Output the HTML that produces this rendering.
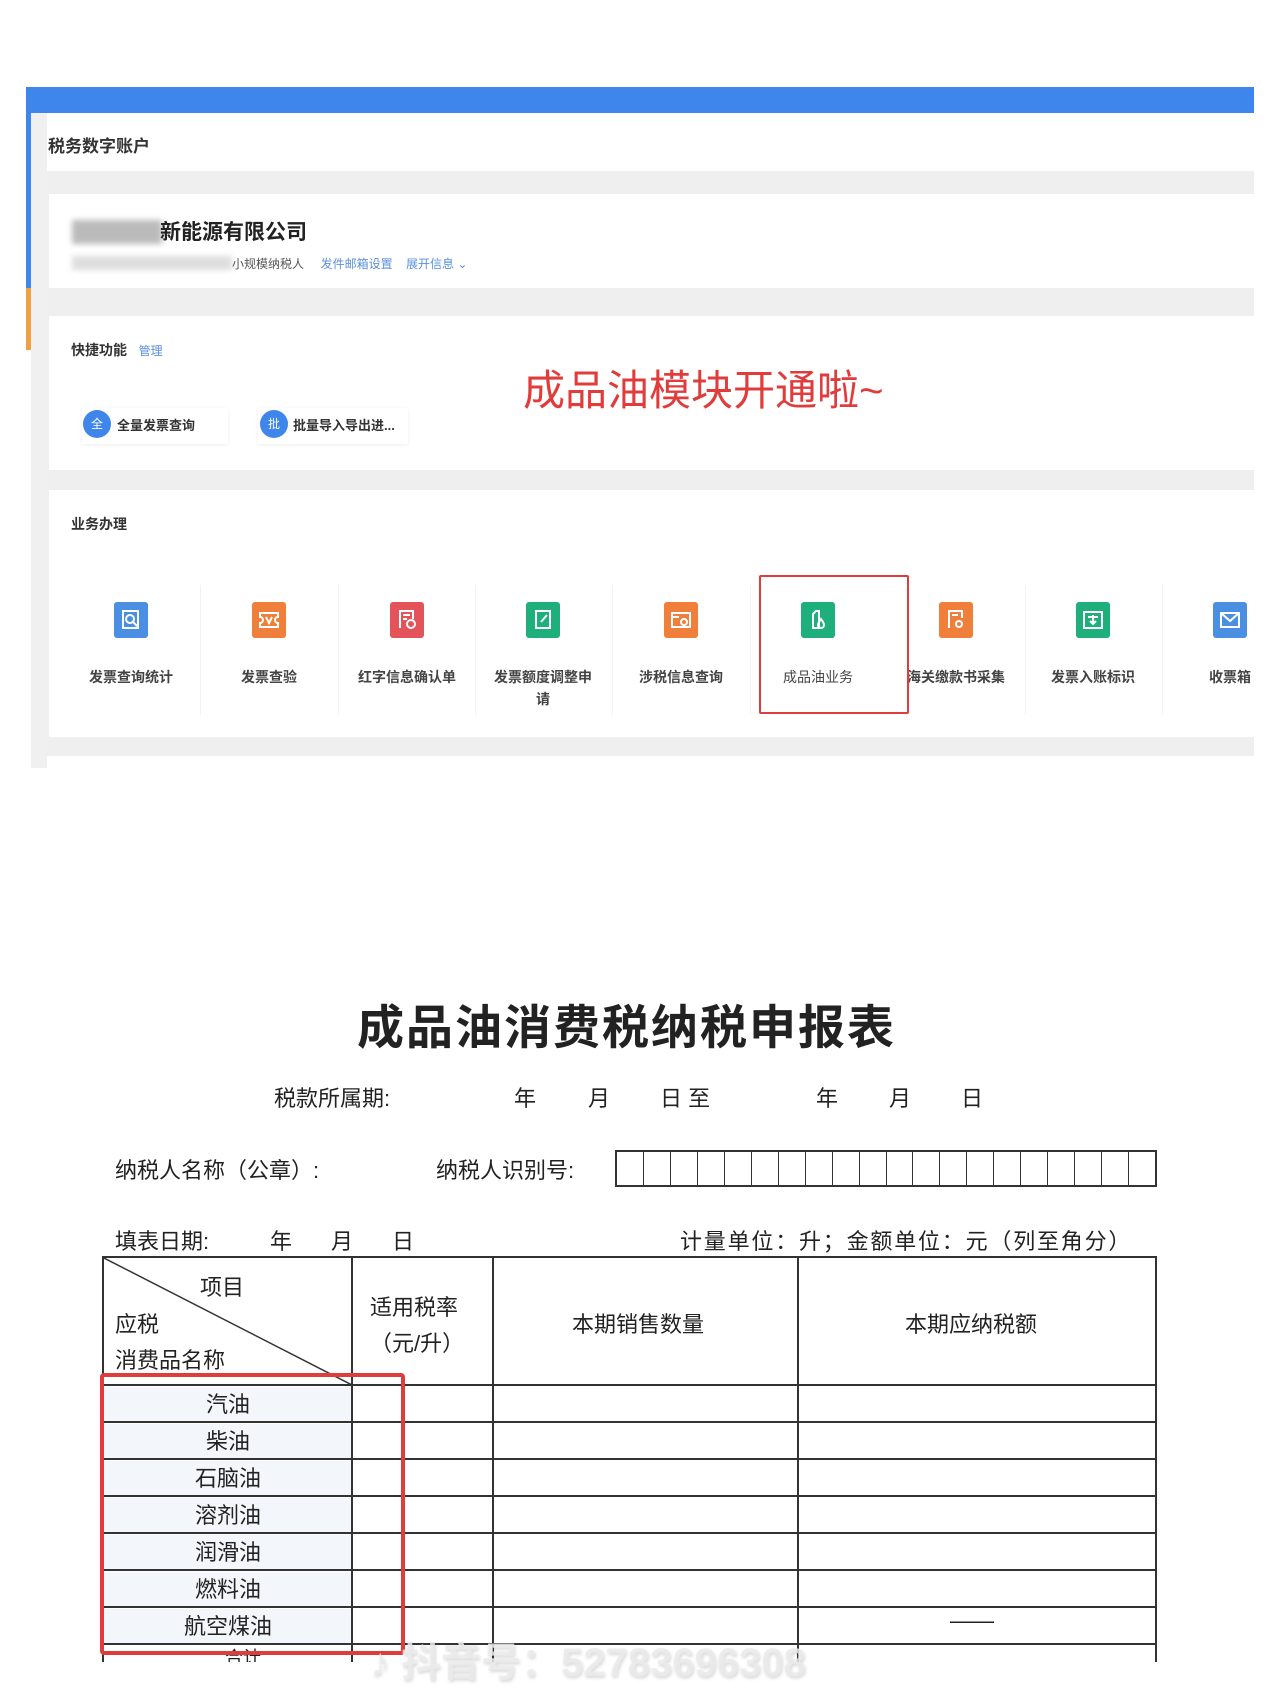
<!DOCTYPE html>
<html><head><meta charset="utf-8"><style>
*{margin:0;padding:0;box-sizing:border-box}
body{width:1280px;height:1706px;background:#fff;position:relative;overflow:hidden;font-family:"Liberation Sans","Noto Sans CJK SC",sans-serif;color:#222}
.a{position:absolute;white-space:nowrap}
.ic{position:absolute;width:34px;height:36px;border-radius:3px;top:602px}
.ic svg{position:absolute;left:7px;top:8px}
.lb{position:absolute;top:666px;width:104px;text-align:center;font-size:14px;line-height:22px;color:#444;font-weight:bold;white-space:normal}
.sep{position:absolute;top:585px;width:1px;height:130px;background:#f2f2f2}
.t{font-size:22px;color:#222}
.hl{position:absolute;left:102px;width:1055px;height:2px;background:#333}
.vl{position:absolute;width:2px;background:#333;top:1257px;height:405px}
.rn{position:absolute;left:104px;width:248px;text-align:center;font-size:22px;background:#f3f7fb;height:35px;line-height:35px}
</style></head><body>
<div class="a" style="left:26px;top:87px;width:1228px;height:26px;background:#3f86ec"></div>
<div class="a" style="left:26px;top:87px;width:5px;height:262px;background:#3f86ec"></div>
<div class="a" style="left:26px;top:288px;width:5px;height:62px;background:#f0a040"></div>
<div class="a" style="left:31px;top:113px;width:16px;height:655px;background:#f0f0f0"></div>
<div class="a" style="left:47px;top:113px;width:1207px;height:58px;background:#fff"></div>
<div class="a" style="left:48px;top:132px;font-size:17px;font-weight:bold;color:#333">税务数字账户</div>
<div class="a" style="left:47px;top:171px;width:1207px;height:585px;background:#efefef"></div>
<div class="a" style="left:49px;top:194px;width:1205px;height:94px;background:#fff"></div>
<div class="a" style="left:72px;top:220px;width:90px;height:24px;background:#bbb;filter:blur(3px)"></div>
<div class="a" style="left:160px;top:216px;font-size:21px;font-weight:bold;color:#222">新能源有限公司</div>
<div class="a" style="left:72px;top:256px;width:160px;height:14px;background:#ddd;filter:blur(3px)"></div>
<div class="a" style="left:232px;top:255px;font-size:12px;color:#555">小规模纳税人 &nbsp;&nbsp;&nbsp;&nbsp;<span style="color:#5a8fe0">发件邮箱设置 &nbsp;&nbsp; 展开信息 ⌄</span></div>
<div class="a" style="left:49px;top:316px;width:1205px;height:154px;background:#fff"></div>
<div class="a" style="left:71px;top:340px;font-size:14px;font-weight:bold;color:#333">快捷功能 &nbsp;&nbsp;<span style="color:#5a8fe0;font-weight:normal;font-size:12px">管理</span></div>
<div class="a" style="left:523px;top:357px;font-size:42px;color:#e03c3c">成品油模块开通啦~</div>
<div class="a" style="left:82px;top:408px;width:146px;height:36px;background:#fff;box-shadow:0 1px 4px #eee"></div>
<div class="a" style="left:83px;top:410px;width:28px;height:28px;border-radius:50%;background:#3f86ec;color:#fff;font-size:12px;text-align:center;line-height:28px">全</div>
<div class="a" style="left:117px;top:415px;font-size:13px;font-weight:bold;color:#333">全量发票查询</div>
<div class="a" style="left:258px;top:408px;width:150px;height:36px;background:#fff;box-shadow:0 1px 4px #eee"></div>
<div class="a" style="left:260px;top:410px;width:28px;height:28px;border-radius:50%;background:#3f86ec;color:#fff;font-size:12px;text-align:center;line-height:28px">批</div>
<div class="a" style="left:293px;top:415px;font-size:13px;font-weight:bold;color:#333">批量导入导出进...</div>
<div class="a" style="left:49px;top:490px;width:1205px;height:247px;background:#fff"></div>
<div class="a" style="left:71px;top:514px;font-size:14px;font-weight:bold;color:#333">业务办理</div>

<div class="sep" style="left:200px"></div><div class="sep" style="left:338px"></div><div class="sep" style="left:475px"></div><div class="sep" style="left:612px"></div><div class="sep" style="left:750px"></div><div class="sep" style="left:1025px"></div><div class="sep" style="left:1162px"></div>

<div class="ic" style="left:114px;background:#4a8fe2"><svg width="20" height="20" fill="none" stroke="#fff" stroke-width="2"><rect x="2" y="1" width="15" height="17"/><circle cx="9" cy="9" r="4"/><path d="M12 12l4 4"/></svg></div>
<div class="ic" style="left:252px;background:#ef7f3a"><svg width="20" height="20" fill="none" stroke="#fff" stroke-width="2"><path d="M1 3h18v4a3 3 0 000 6v4H1v-4a3 3 0 000-6z"/><path d="M7 7l3 6 3-6"/></svg></div>
<div class="ic" style="left:390px;background:#e4525a"><svg width="20" height="20" fill="none" stroke="#fff" stroke-width="2"><path d="M3 18V1h13v8M6 5h7M6 9h4"/><circle cx="14" cy="14" r="4"/></svg></div>
<div class="ic" style="left:526px;background:#1faf7d"><svg width="20" height="20" fill="none" stroke="#fff" stroke-width="2"><path d="M3 18V1h14v17zM8 12l6-7"/></svg></div>
<div class="ic" style="left:664px;background:#ef7f3a"><svg width="20" height="20" fill="none" stroke="#fff" stroke-width="2"><path d="M1 3h18v14H1zM1 7h7"/><circle cx="13" cy="12" r="3"/></svg></div>
<div class="ic" style="left:801px;background:#1faf7d"><svg width="20" height="20" fill="none" stroke="#fff" stroke-width="2"><path d="M5 18V4l3-3h3v17z"/><path d="M13 9c-2 3-3 4-3 6a3 3 0 006 0c0-2-1-3-3-6z"/></svg></div>
<div class="ic" style="left:939px;background:#ef7f3a"><svg width="20" height="20" fill="none" stroke="#fff" stroke-width="2"><path d="M3 18V1h13v7M6 5h6"/><circle cx="13" cy="14" r="3"/></svg></div>
<div class="ic" style="left:1076px;background:#1faf7d"><svg width="20" height="20" fill="none" stroke="#fff" stroke-width="2"><path d="M1 2h18v16H1zM5 7h10M10 5v8M7 11l3 3 3-3"/></svg></div>
<div class="ic" style="left:1213px;background:#4a8fe2"><svg width="20" height="20" fill="none" stroke="#fff" stroke-width="2"><path d="M1 3h18v14H1zM1 3l9 8 9-8"/></svg></div>

<div class="lb" style="left:79px">发票查询统计</div>
<div class="lb" style="left:217px">发票查验</div>
<div class="lb" style="left:355px">红字信息确认单</div>
<div class="lb" style="left:491px">发票额度调整申请</div>
<div class="lb" style="left:629px">涉税信息查询</div>
<div class="lb" style="left:766px;font-weight:normal">成品油业务</div>
<div class="lb" style="left:904px">海关缴款书采集</div>
<div class="lb" style="left:1041px">发票入账标识</div>
<div class="lb" style="left:1178px">收票箱</div>
<div class="a" style="left:759px;top:575px;width:150px;height:139px;border:2px solid #e03c3c;border-radius:2px"></div>

<div class="a" style="left:357px;top:989px;font-size:47px;font-weight:bold;letter-spacing:2px;color:#222">成品油消费税纳税申报表</div>
<div class="a t" style="left:274px;top:1081px">税款所属期:</div>
<div class="a t" style="left:514px;top:1081px">年</div><div class="a t" style="left:588px;top:1081px">月</div><div class="a t" style="left:660px;top:1081px">日 至</div>
<div class="a t" style="left:816px;top:1081px">年</div><div class="a t" style="left:889px;top:1081px">月</div><div class="a t" style="left:961px;top:1081px">日</div>
<div class="a t" style="left:115px;top:1153px">纳税人名称（公章）:</div>
<div class="a t" style="left:436px;top:1153px">纳税人识别号:</div>
<div class="a" style="left:615px;top:1150px;width:542px;height:37px;border:2px solid #333;display:flex">
<div style="flex:1;border-right:1px solid #333"></div><div style="flex:1;border-right:1px solid #333"></div><div style="flex:1;border-right:1px solid #333"></div><div style="flex:1;border-right:1px solid #333"></div><div style="flex:1;border-right:1px solid #333"></div><div style="flex:1;border-right:1px solid #333"></div><div style="flex:1;border-right:1px solid #333"></div><div style="flex:1;border-right:1px solid #333"></div><div style="flex:1;border-right:1px solid #333"></div><div style="flex:1;border-right:1px solid #333"></div><div style="flex:1;border-right:1px solid #333"></div><div style="flex:1;border-right:1px solid #333"></div><div style="flex:1;border-right:1px solid #333"></div><div style="flex:1;border-right:1px solid #333"></div><div style="flex:1;border-right:1px solid #333"></div><div style="flex:1;border-right:1px solid #333"></div><div style="flex:1;border-right:1px solid #333"></div><div style="flex:1;border-right:1px solid #333"></div><div style="flex:1;border-right:1px solid #333"></div><div style="flex:1"></div></div>
<div class="a t" style="left:115px;top:1224px">填表日期:</div>
<div class="a t" style="left:270px;top:1224px">年</div><div class="a t" style="left:331px;top:1224px">月</div><div class="a t" style="left:392px;top:1224px">日</div>
<div class="a t" style="left:680px;top:1224px;letter-spacing:1.8px">计量单位：升；金额单位：元（列至角分）</div>

<div class="rn" style="top:1387px">汽油</div><div class="rn" style="top:1424px">柴油</div><div class="rn" style="top:1461px">石脑油</div><div class="rn" style="top:1498px">溶剂油</div><div class="rn" style="top:1535px">润滑油</div><div class="rn" style="top:1572px">燃料油</div><div class="rn" style="top:1609px">航空煤油</div>
<div class="hl" style="top:1256px"></div><div class="hl" style="top:1384px"></div><div class="hl" style="top:1421px"></div><div class="hl" style="top:1458px"></div><div class="hl" style="top:1495px"></div><div class="hl" style="top:1532px"></div><div class="hl" style="top:1569px"></div><div class="hl" style="top:1606px"></div><div class="hl" style="top:1643px"></div>
<div class="vl" style="left:102px"></div><div class="vl" style="left:351px"></div><div class="vl" style="left:492px"></div><div class="vl" style="left:797px"></div><div class="vl" style="left:1155px"></div>
<svg class="a" style="left:102px;top:1257px" width="250" height="128"><line x1="0" y1="0" x2="250" y2="128" stroke="#333" stroke-width="1.5"/></svg>
<div class="a t" style="left:200px;top:1270px">项目</div>
<div class="a t" style="left:115px;top:1307px">应税</div>
<div class="a t" style="left:115px;top:1343px">消费品名称</div>
<div class="a t" style="left:370px;top:1290px">适用税率</div>
<div class="a t" style="left:370px;top:1326px">（元/升）</div>
<div class="a t" style="left:572px;top:1307px">本期销售数量</div>
<div class="a t" style="left:905px;top:1307px">本期应纳税额</div>
<div class="a t" style="left:950px;top:1608px">——</div>
<div class="a t" style="left:225px;top:1644px;font-size:18px">合计</div>
<div class="a" style="left:0;top:1662px;width:1280px;height:44px;background:#fff"></div>
<div class="a" style="left:100px;top:1373px;width:305px;height:282px;border:4px solid #e03c3c;border-radius:4px"></div>
<div class="a" style="left:370px;top:1630px;font-size:40px;font-weight:bold;color:rgba(235,235,235,0.85);text-shadow:1px 2px 3px rgba(0,0,0,0.15)">♪ 抖音号：52783696308</div>
</body></html>
